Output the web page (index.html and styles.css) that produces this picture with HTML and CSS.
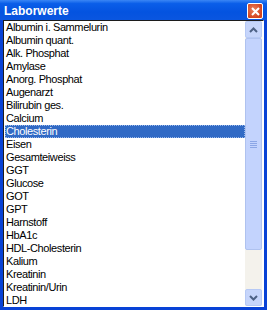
FILE: index.html
```html
<!DOCTYPE html>
<html lang="de">
<head>
    <meta charset="UTF-8">
    <title>Laborwerte</title>
    <link rel="stylesheet" href="styles.css">
</head>
<body>
    <div class="window">
        <div class="titlebar">
            <span class="title">Laborwerte</span>
            <button class="close-btn">
                <svg width="9" height="9" viewBox="0 0 9 9"><path d="M1 1L8 8M8 1L1 8" stroke="#fff" stroke-width="2"/></svg>
            </button>
        </div>
        <div class="frame">
            <div class="listbox">
                <ul class="items">
                    <li>Albumin i. Sammelurin</li>
                    <li>Albumin quant.</li>
                    <li>Alk. Phosphat</li>
                    <li>Amylase</li>
                    <li>Anorg. Phosphat</li>
                    <li>Augenarzt</li>
                    <li>Bilirubin ges.</li>
                    <li>Calcium</li>
                    <li class="selected">Cholesterin</li>
                    <li>Eisen</li>
                    <li>Gesamteiweiss</li>
                    <li>GGT</li>
                    <li>Glucose</li>
                    <li>GOT</li>
                    <li>GPT</li>
                    <li>Harnstoff</li>
                    <li>HbA1c</li>
                    <li>HDL-Cholesterin</li>
                    <li>Kalium</li>
                    <li>Kreatinin</li>
                    <li>Kreatinin/Urin</li>
                    <li>LDH</li>
                </ul>
                <div class="scrollbar">
                    <div class="arrow">
                        <svg width="9" height="6" viewBox="0 0 9 6"><path d="M1 5L4.5 1.5L8 5" fill="none" stroke="#4d6185" stroke-width="2"/></svg>
                    </div>
                    <div class="thumb">
                        <svg width="7" height="7" viewBox="0 0 7 7"><path d="M0 0.5H7M0 2.5H7M0 4.5H7M0 6.5H7" stroke="#8ba6e6" stroke-width="1"/></svg>
                    </div>
                    <div class="track"></div>
                    <div class="arrow">
                        <svg width="9" height="6" viewBox="0 0 9 6"><path d="M1 1L4.5 4.5L8 1" fill="none" stroke="#4d6185" stroke-width="2"/></svg>
                    </div>
                </div>
            </div>
        </div>
    </div>
</body>
</html>
```

FILE: styles.css
```css
body {
    margin: 0;
    padding: 0;
    background: #fff;
}
.window {
    width: 267px;
    height: 310px;
    display: flex;
    flex-direction: column;
    background: #0842d6;
}
.titlebar {
    height: 20px;
    display: flex;
    align-items: center;
    justify-content: space-between;
    padding: 0 4px 0 4px;
    background: linear-gradient(to bottom, #3a86f5 0%, #0a5ee9 18%, #0453e0 60%, #0a56e0 100%);
}
.title {
    font-family: "Liberation Sans", Tahoma, sans-serif;
    font-weight: bold;
    font-size: 12px;
    color: #fff;
    margin-top: 2px;
}
.close-btn {
    width: 16px;
    height: 16px;
    padding: 0;
    margin-top: 2px;
    border: 1px solid #fff;
    border-radius: 2px;
    background: radial-gradient(circle at 40% 40%, #e9805c, #d3441f 70%);
    display: flex;
    align-items: center;
    justify-content: center;
}
.frame {
    flex: 1;
    display: flex;
    padding: 0 3px 3px 3px;
    min-height: 0;
}
.listbox {
    flex: 1;
    display: flex;
    background: #fff;
    border: 1px solid #1c1c1c;
    border-right-color: #fff;
    border-bottom-color: #fff;
    min-height: 0;
}
.items {
    flex: 1;
    list-style: none;
    margin: 0;
    padding: 0 0 0 1px;
    overflow: hidden;
    font-family: "Liberation Sans", Arial, sans-serif;
    font-size: 11px;
    letter-spacing: -0.4px;
    color: #000;
}
.items li {
    height: 13px;
    line-height: 13px;
    padding-left: 1px;
    white-space: nowrap;
}
.items li.selected {
    background: #316ac5;
    color: #fff;
    outline: 1px dotted #9ab8ea;
    outline-offset: -1px;
}
.scrollbar {
    width: 17px;
    display: flex;
    flex-direction: column;
    background: #f4f2ec;
    margin-right: 1px;
}
.arrow {
    height: 17px;
    box-sizing: border-box;
    background: #c6d5fb;
    border: 1px solid #b6c9f5;
    border-radius: 2px;
    display: flex;
    align-items: center;
    justify-content: center;
}
.thumb {
    height: 212px;
    box-sizing: border-box;
    background: #c3d3fd;
    border: 1px solid #afc2ef;
    border-radius: 2px;
    display: flex;
    align-items: center;
    justify-content: center;
}
.track {
    flex: 1;
}
```
